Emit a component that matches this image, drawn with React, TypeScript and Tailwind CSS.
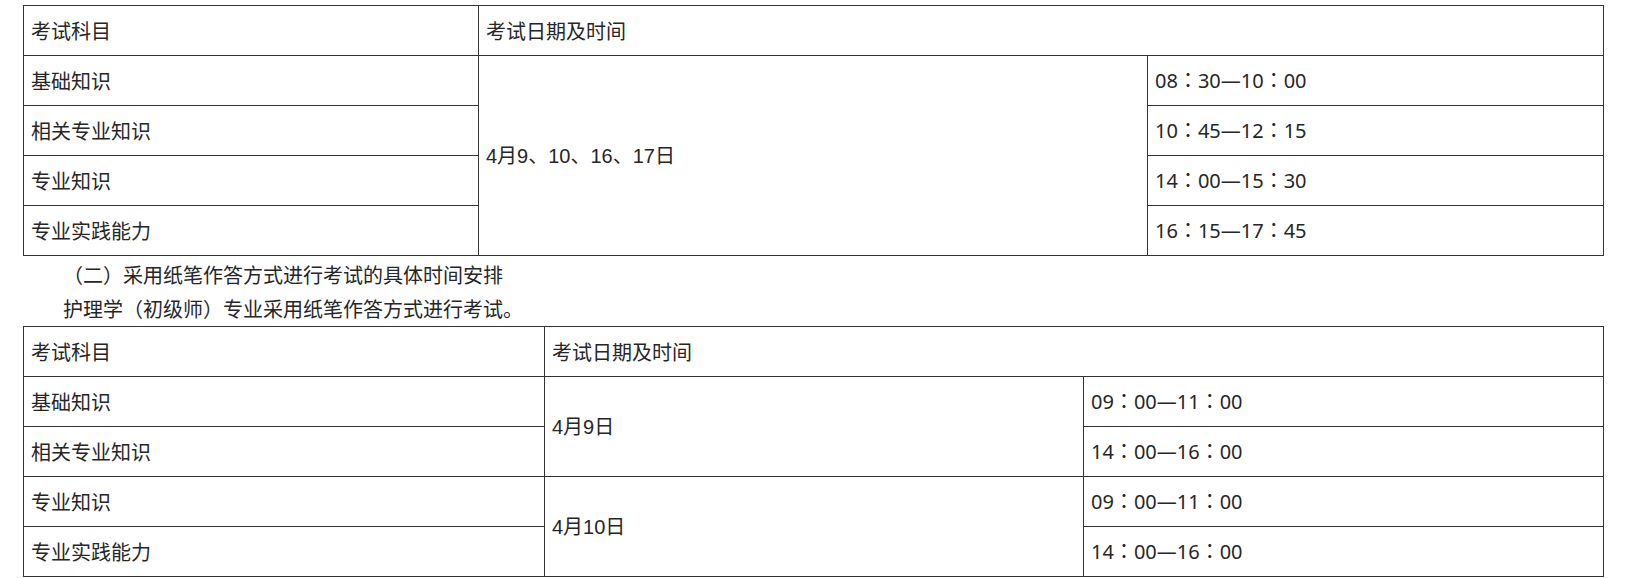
const cell = 'flex items-center pl-[7px] border-r border-b border-[#333]'
const cjk = "font-['Noto_Sans_CJK_SC',sans-serif]"
const dateFont = "font-['Liberation_Sans','Noto_Sans_CJK_SC',sans-serif]"
// JP variant keeps the full-width colon centred, as in the reference
const timeFont = "font-['Noto_Sans','Noto_Sans_CJK_JP',sans-serif]"

export default function App() {
  return (
    <div className={`min-h-screen bg-white text-[20px] leading-[30px] text-[#262626] pt-[5px] pl-[23px] ${cjk}`}>
      {/* first table: computer-based exams */}
      <div className="grid w-[1581px] grid-cols-[455px_669px_456px] grid-rows-[50px_50px_50px_50px_50px] border-l border-t border-[#333]">
        <div className={`${cell} col-start-1 row-start-1`}>考试科目</div>
        <div className={`${cell} col-start-2 col-span-2 row-start-1`}>考试日期及时间</div>

        <div className={`${cell} col-start-1 row-start-2`}>基础知识</div>
        <div className={`${cell} col-start-1 row-start-3`}>相关专业知识</div>
        <div className={`${cell} col-start-1 row-start-4`}>专业知识</div>
        <div className={`${cell} col-start-1 row-start-5`}>专业实践能力</div>

        <div className={`${cell} ${dateFont} col-start-2 row-start-2 row-span-4`}>4月9、10、16、17日</div>

        <div className={`${cell} ${timeFont} col-start-3 row-start-2`}>08：30—10：00</div>
        <div className={`${cell} ${timeFont} col-start-3 row-start-3`}>10：45—12：15</div>
        <div className={`${cell} ${timeFont} col-start-3 row-start-4`}>14：00—15：30</div>
        <div className={`${cell} ${timeFont} col-start-3 row-start-5`}>16：15—17：45</div>
      </div>

      <div className="w-[1581px] pt-[2px]">
        <p className="h-[34px] leading-[34px] indent-[40px]">（二）采用纸笔作答方式进行考试的具体时间安排</p>
        <p className="h-[34px] leading-[34px] indent-[40px]">护理学（初级师）专业采用纸笔作答方式进行考试。</p>
      </div>

      {/* second table: paper-based exams */}
      <div className="grid w-[1581px] grid-cols-[521px_539px_520px] grid-rows-[50px_50px_50px_50px_50px] border-l border-t border-[#333]">
        <div className={`${cell} col-start-1 row-start-1`}>考试科目</div>
        <div className={`${cell} col-start-2 col-span-2 row-start-1`}>考试日期及时间</div>

        <div className={`${cell} col-start-1 row-start-2`}>基础知识</div>
        <div className={`${cell} col-start-1 row-start-3`}>相关专业知识</div>
        <div className={`${cell} col-start-1 row-start-4`}>专业知识</div>
        <div className={`${cell} col-start-1 row-start-5`}>专业实践能力</div>

        <div className={`${cell} ${dateFont} col-start-2 row-start-2 row-span-2`}>4月9日</div>
        <div className={`${cell} ${dateFont} col-start-2 row-start-4 row-span-2`}>4月10日</div>

        <div className={`${cell} ${timeFont} col-start-3 row-start-2`}>09：00—11：00</div>
        <div className={`${cell} ${timeFont} col-start-3 row-start-3`}>14：00—16：00</div>
        <div className={`${cell} ${timeFont} col-start-3 row-start-4`}>09：00—11：00</div>
        <div className={`${cell} ${timeFont} col-start-3 row-start-5`}>14：00—16：00</div>
      </div>
    </div>
  )
}
